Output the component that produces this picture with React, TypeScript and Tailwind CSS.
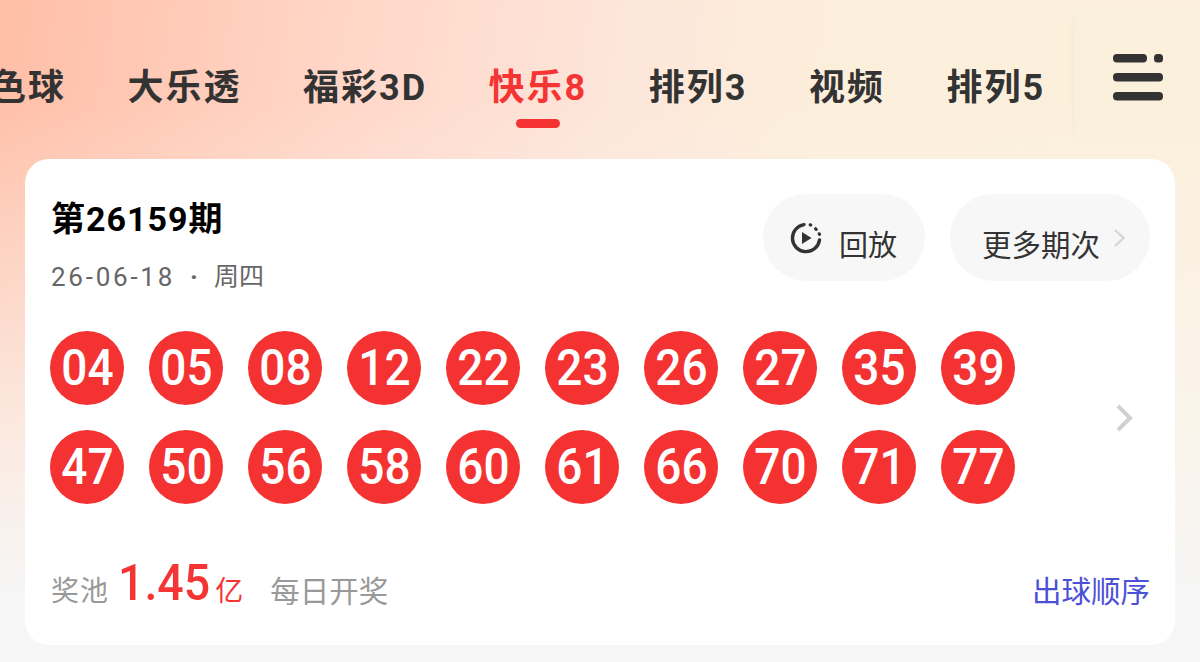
const tabs = ["双色球", "大乐透", "福彩3D", "快乐8", "排列3", "视频", "排列5"];
const balls = [
  ["04", "05", "08", "12", "22", "23", "26", "27", "35", "39"],
  ["47", "50", "56", "58", "60", "61", "66", "70", "71", "77"],
];

const font = "font-['Roboto','Noto_Sans_CJK_SC',sans-serif]";

const App = () => {
  return (
    <div className={`relative h-[662px] w-[1200px] overflow-hidden bg-[linear-gradient(180deg,rgba(250,245,240,0)_0%,rgba(250,245,240,0)_15%,rgba(250,245,240,0.8)_68%,#f6f6f6_90%),linear-gradient(100deg,#ffbea6_0%,#ffd9cb_30%,#fde6da_48%,#fcefdb_65%,#fbf0dc_100%)] ${font}`}>
      <div className="h-[159px] overflow-hidden">
        <div className="ml-[-48px] flex w-[1400px] gap-[61.5px] pt-[65px]">
          {tabs.map((t) => (
            <div key={t} className="relative shrink-0">
              <span className={`block text-[36px] leading-[46px] font-bold tracking-[2px] whitespace-nowrap ${t === "快乐8" ? "text-[#f53434]" : "text-[#333333]"}`}>
                {t}
              </span>
              {t === "快乐8" && (
                <div className="mx-auto mt-[8px] h-[9px] w-[44px] rounded-full bg-[#f43232]" />
              )}
            </div>
          ))}
        </div>
      </div>

      {/* menu button sits over the scrolling tabs */}
      <div className="absolute top-[8px] right-0 flex h-[132px] w-[125px] items-center justify-center bg-[#fbf0dc] pt-[7px] shadow-[-6px_0_10px_-8px_rgba(180,150,110,0.14)]">
        <svg width="50" height="47" viewBox="0 0 50 47" fill="#333333">
          <rect x="0" y="0" width="34" height="8.5" rx="4" />
          <rect x="41" y="0" width="9" height="8.5" rx="3.5" />
          <rect x="0" y="19" width="50" height="8.5" rx="4" />
          <rect x="0" y="38" width="50" height="8.5" rx="4" />
        </svg>
      </div>

      <div className="mx-[25px] flex h-[486px] flex-col rounded-[24px] bg-white pt-[35px] pr-[25px] pl-[25px]">
        <div className="flex items-start justify-between">
          <div>
            <div className="mt-[4px] ml-[1px] text-[34px] leading-[42px] font-bold tracking-[1px] text-black">第26159期</div>
            <div className="mt-[22px] ml-[1px] flex items-center text-[26px] leading-[30px] text-[#666666]">
              <span className="tracking-[2.75px]">26-06-18</span>
              <span className="mr-[16px] ml-[15px] font-bold">·</span>
              <span className="text-[25px]">周四</span>
            </div>
          </div>
          <div className="flex gap-[25px]">
            <div className="flex h-[87px] w-[162px] items-center rounded-full bg-[#f7f7f7] pl-[26px] text-[#333333]">
              <svg width="34" height="34" viewBox="0 0 34 34" fill="none">
                <path d="M15 3.6A13.6 13.6 0 1 0 30.5 19" stroke="#333333" strokeWidth="3.4" strokeLinecap="round" />
                <path d="M13 11v12l9.5-6z" fill="#333333" />
                <path d="M21.2 3.8l.5.2M26.6 7.8l.6.6M30.2 12.8l.3.6" stroke="#333333" strokeWidth="3.2" strokeLinecap="round" />
              </svg>
              <span className="mt-[18px] ml-[16px] text-[29px] leading-none">回放</span>
            </div>
            <div className="flex h-[87px] w-[200px] items-center rounded-full bg-[#f7f7f7] pl-[32px] text-[#333333]">
              <span className="mt-[18px] text-[29.5px] leading-none">更多期次</span>
              <svg width="14" height="20" viewBox="0 0 14 20" fill="none" className="ml-[13px]">
                <path d="M2 2l8.5 8-8.5 8" stroke="#d6d6d6" strokeWidth="2.4" />
              </svg>
            </div>
          </div>
        </div>

        <div className="mt-[39px] flex items-center justify-between">
          <div className="flex flex-col gap-[25px]">
            {balls.map((row, i) => (
              <div key={i} className="flex gap-[25px]">
                {row.map((n) => (
                  <div key={n} className="flex h-[74px] w-[74px] items-center justify-center rounded-full bg-[#f43232] text-white">
                    <span className="scale-x-[0.92] text-[50px] leading-none font-medium">{n}</span>
                  </div>
                ))}
              </div>
            ))}
          </div>
          <svg width="20" height="30" viewBox="0 0 20 30" fill="none" className="mr-[15px]">
            <path d="M3 3l12 12-12 12" stroke="#d0d0d0" strokeWidth="4" />
          </svg>
        </div>

        <div className="mt-[53px] flex items-end justify-between">
          <div className="ml-[1px] flex items-end">
            <span className="text-[28px] leading-[34px] tracking-[1px] text-[#999999]">奖池</span>
            <span className="ml-[9px] origin-left scale-x-[0.93] text-[50px] leading-[52px] font-medium text-[#f53434]">1.45</span>
            <span className="ml-[-2px] text-[28px] leading-[34px] text-[#f53434]">亿</span>
            <span className="ml-[27px] text-[29.5px] leading-[34px] text-[#999999]">每日开奖</span>
          </div>
          <span className="text-[29.5px] leading-[34px] text-[#4c50d6]">出球顺序</span>
        </div>
      </div>
    </div>
  );
};

export default App;
